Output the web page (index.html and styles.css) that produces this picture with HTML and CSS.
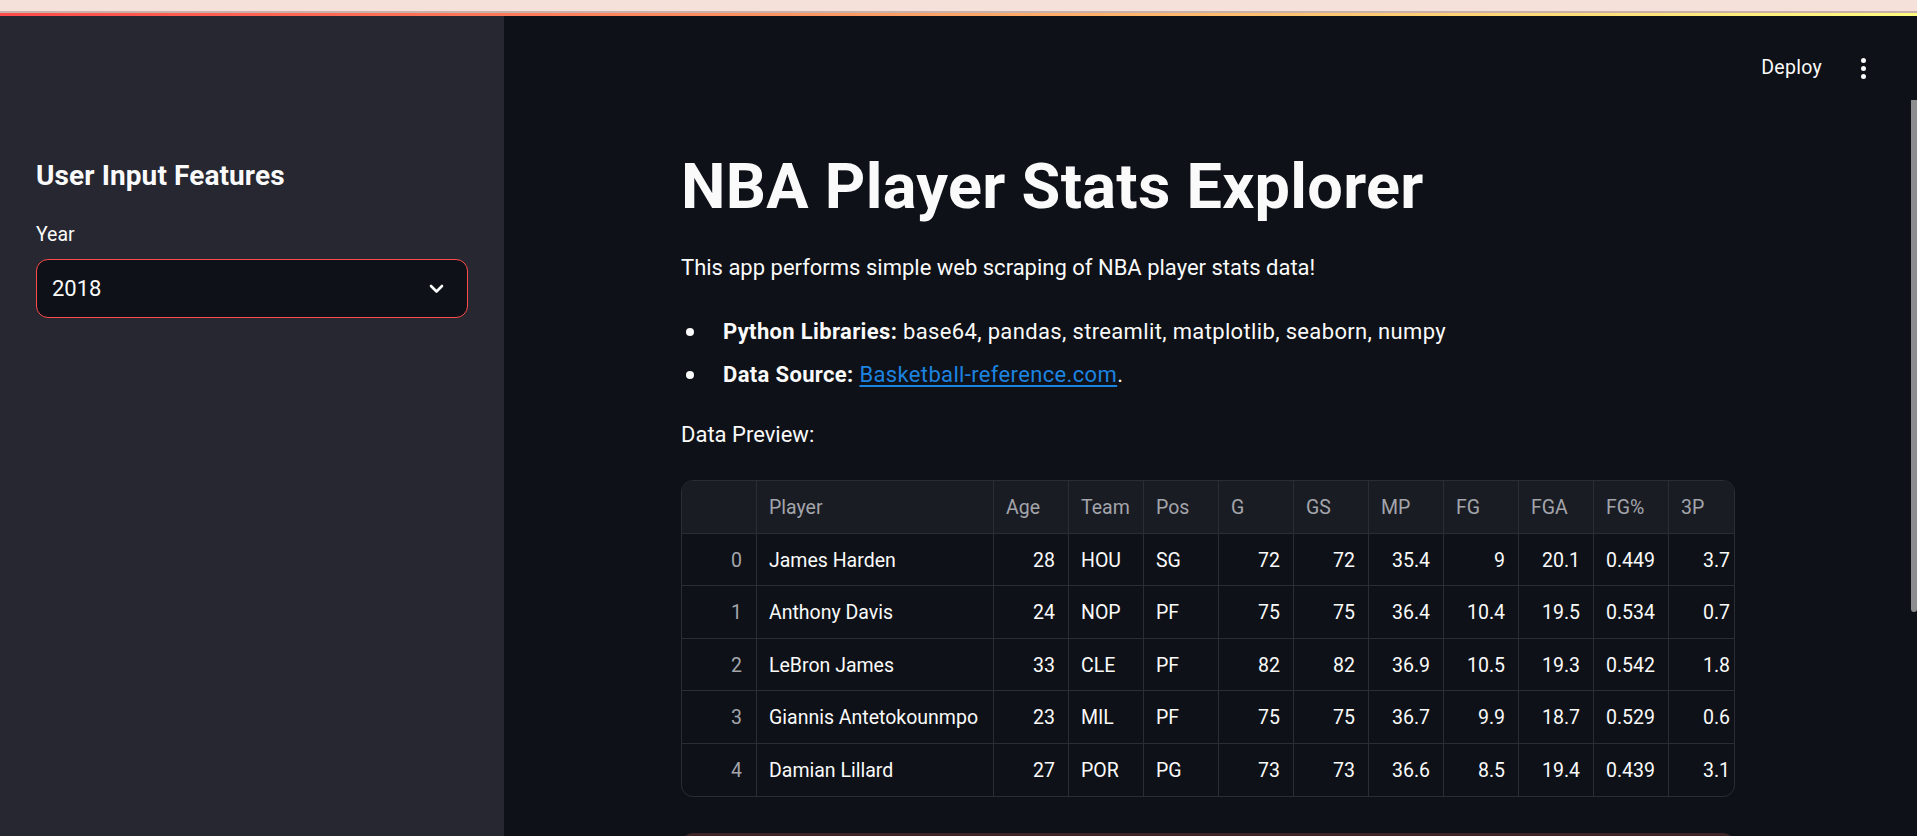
FILE: index.html
```html
<!DOCTYPE html>
<html lang="en">
<head>
<meta charset="utf-8">
<title>NBA Player Stats Explorer</title>
<link rel="stylesheet" href="styles.css">
</head>
<body>
<div class="chrome"></div>
<div class="chrome-line"></div>
<div class="decoration"></div>
<div class="app">
  <aside class="sidebar">
    <h2 class="side-title">User Input Features</h2>
    <div class="field-label">Year</div>
    <div class="select">
      <span class="select-value">2018</span>
      <svg class="chevron" width="15" height="10" viewBox="0 0 15 10"><path d="M2 2 L7.5 7.5 L13 2" fill="none" stroke="#fafafa" stroke-width="2.6" stroke-linecap="round" stroke-linejoin="round"/></svg>
    </div>
  </aside>
  <main class="main">
    <header class="toolbar">
      <span class="deploy">Deploy</span>
      <span class="kebab"><i></i><i></i><i></i></span>
    </header>
    <div class="block">
      <h1 class="title">NBA Player Stats Explorer</h1>
      <p class="text intro">This app performs simple web scraping of NBA player stats data!</p>
      <ul class="list">
        <li><b>Python Libraries:</b> base64, pandas, streamlit, matplotlib, seaborn, numpy</li>
        <li><b>Data Source:</b> <a href="#">Basketball-reference.com</a>.</li>
      </ul>
      <p class="text preview">Data Preview:</p>
      <div class="frame">
        <div class="grid">
          <div class="c h idx"></div><div class="c h">Player</div><div class="c h">Age</div><div class="c h">Team</div><div class="c h">Pos</div><div class="c h">G</div><div class="c h">GS</div><div class="c h">MP</div><div class="c h">FG</div><div class="c h">FGA</div><div class="c h">FG%</div><div class="c h">3P</div>

          <div class="c idx n">0</div><div class="c">James Harden</div><div class="c n">28</div><div class="c">HOU</div><div class="c">SG</div><div class="c n">72</div><div class="c n">72</div><div class="c n">35.4</div><div class="c n">9</div><div class="c n">20.1</div><div class="c n">0.449</div><div class="c n">3.7</div>

          <div class="c idx n">1</div><div class="c">Anthony Davis</div><div class="c n">24</div><div class="c">NOP</div><div class="c">PF</div><div class="c n">75</div><div class="c n">75</div><div class="c n">36.4</div><div class="c n">10.4</div><div class="c n">19.5</div><div class="c n">0.534</div><div class="c n">0.7</div>

          <div class="c idx n">2</div><div class="c">LeBron James</div><div class="c n">33</div><div class="c">CLE</div><div class="c">PF</div><div class="c n">82</div><div class="c n">82</div><div class="c n">36.9</div><div class="c n">10.5</div><div class="c n">19.3</div><div class="c n">0.542</div><div class="c n">1.8</div>

          <div class="c idx n">3</div><div class="c">Giannis Antetokounmpo</div><div class="c n">23</div><div class="c">MIL</div><div class="c">PF</div><div class="c n">75</div><div class="c n">75</div><div class="c n">36.7</div><div class="c n">9.9</div><div class="c n">18.7</div><div class="c n">0.529</div><div class="c n">0.6</div>

          <div class="c idx n last">4</div><div class="c last">Damian Lillard</div><div class="c n last">27</div><div class="c last">POR</div><div class="c last">PG</div><div class="c n last">73</div><div class="c n last">73</div><div class="c n last">36.6</div><div class="c n last">8.5</div><div class="c n last">19.4</div><div class="c n last">0.439</div><div class="c n last">3.1</div>
        </div>
      </div>
      <div class="next-box"></div>
    </div>
  </main>
  <div class="scroll-thumb"></div>
</div>
</body>
</html>
```
FILE: styles.css
```css
* { box-sizing: border-box; }
html, body {
  margin: 0;
  padding: 0;
  height: 836px;
  overflow: hidden;
  background: #0e1117;
  font-family: Roboto, "Noto Sans", sans-serif;
  color: #fafafa;
}
.chrome { height: 11px; background: #f5e1da; }
.chrome-line { height: 2px; background: #c9b1aa; }
.decoration {
  height: 3px;
  background: linear-gradient(90deg, #ff4b4b, #fffd80);
}
.app {
  position: relative;
  display: flex;
  height: 820px;
  overflow: hidden;
}
.sidebar {
  flex: 0 0 504px;
  background: #262730;
  padding: 140px 36px 0;
}
.side-title {
  margin: 0;
  font-size: 28px;
  line-height: 40px;
  font-weight: 700;
  letter-spacing: 0.1px;
}
.field-label {
  margin-top: 25px;
  font-size: 19.5px;
  line-height: 28px;
}
.select {
  margin-top: 10px;
  height: 59px;
  border: 1px solid #ff4b4b;
  border-radius: 12px;
  background: #0e1117;
  display: flex;
  align-items: center;
  justify-content: space-between;
  padding: 0 23px 0 15px;
}
.select-value { font-size: 22px; }
.chevron { display: block; }
.main {
  flex: 1;
  display: flex;
  flex-direction: column;
  min-width: 0;
}
.toolbar {
  margin-top: 38px;
  height: 28px;
  display: flex;
  justify-content: flex-end;
  align-items: center;
  gap: 39px;
  padding-right: 51px;
}
.deploy { font-size: 19.5px; line-height: 28px; letter-spacing: 0.3px; }
.kebab { display: flex; flex-direction: column; gap: 3px; }
.kebab i { width: 5px; height: 5px; border-radius: 50%; background: #fafafa; display: block; }
.block {
  margin-left: 177px;
  width: 1054px;
  padding-top: 67px;
}
.title {
  margin: 0;
  font-size: 63px;
  line-height: 76px;
  font-weight: 700;
  letter-spacing: 0.3px;
}
.text {
  margin: 0;
  font-size: 22px;
  line-height: 34px;
}
.intro { margin-top: 26px; }
.list {
  list-style: none;
  margin: 30px 0 0;
  padding: 0;
  font-size: 22px;
  line-height: 34px;
  letter-spacing: 0.35px;
}
.list li {
  position: relative;
  padding-left: 42px;
  margin-bottom: 9px;
}
.list li::before {
  content: "";
  position: absolute;
  left: 5px;
  top: 13px;
  width: 8px;
  height: 8px;
  border-radius: 50%;
  background: #fafafa;
}
.list a { color: #1c83e1; text-decoration: underline; text-underline-offset: 3px; }
.preview { margin-top: 26px; }
.frame {
  margin-top: 28px;
  width: 1054px;
  border: 1px solid #2b2d35;
  border-radius: 12px;
  overflow: hidden;
}
.grid {
  display: grid;
  grid-template-columns: 75px 237px repeat(10, 75px);
  grid-auto-rows: 52.5px;
  width: 1063px;
}
.c {
  border-right: 1px solid #2b2d35;
  border-bottom: 1px solid #2b2d35;
  padding: 2px 12px 0;
  display: flex;
  align-items: center;
  font-size: 19.5px;
  white-space: nowrap;
  overflow: hidden;
}
.c.h { background: #1a1c24; color: #a3a5ab; }
.c.n { justify-content: flex-end; padding-right: 13px; }
.c.idx { color: #a3a5ab; padding-right: 14px; }
.c.last { border-bottom: none; }
.next-box {
  margin-top: 36px;
  height: 60px;
  border-radius: 12px;
  background: #3d2428;
}
.scroll-thumb {
  position: absolute;
  right: 0;
  top: 84px;
  width: 6px;
  height: 512px;
  border-radius: 0 0 3px 3px;
  background: #8d8d8f;
}
```
